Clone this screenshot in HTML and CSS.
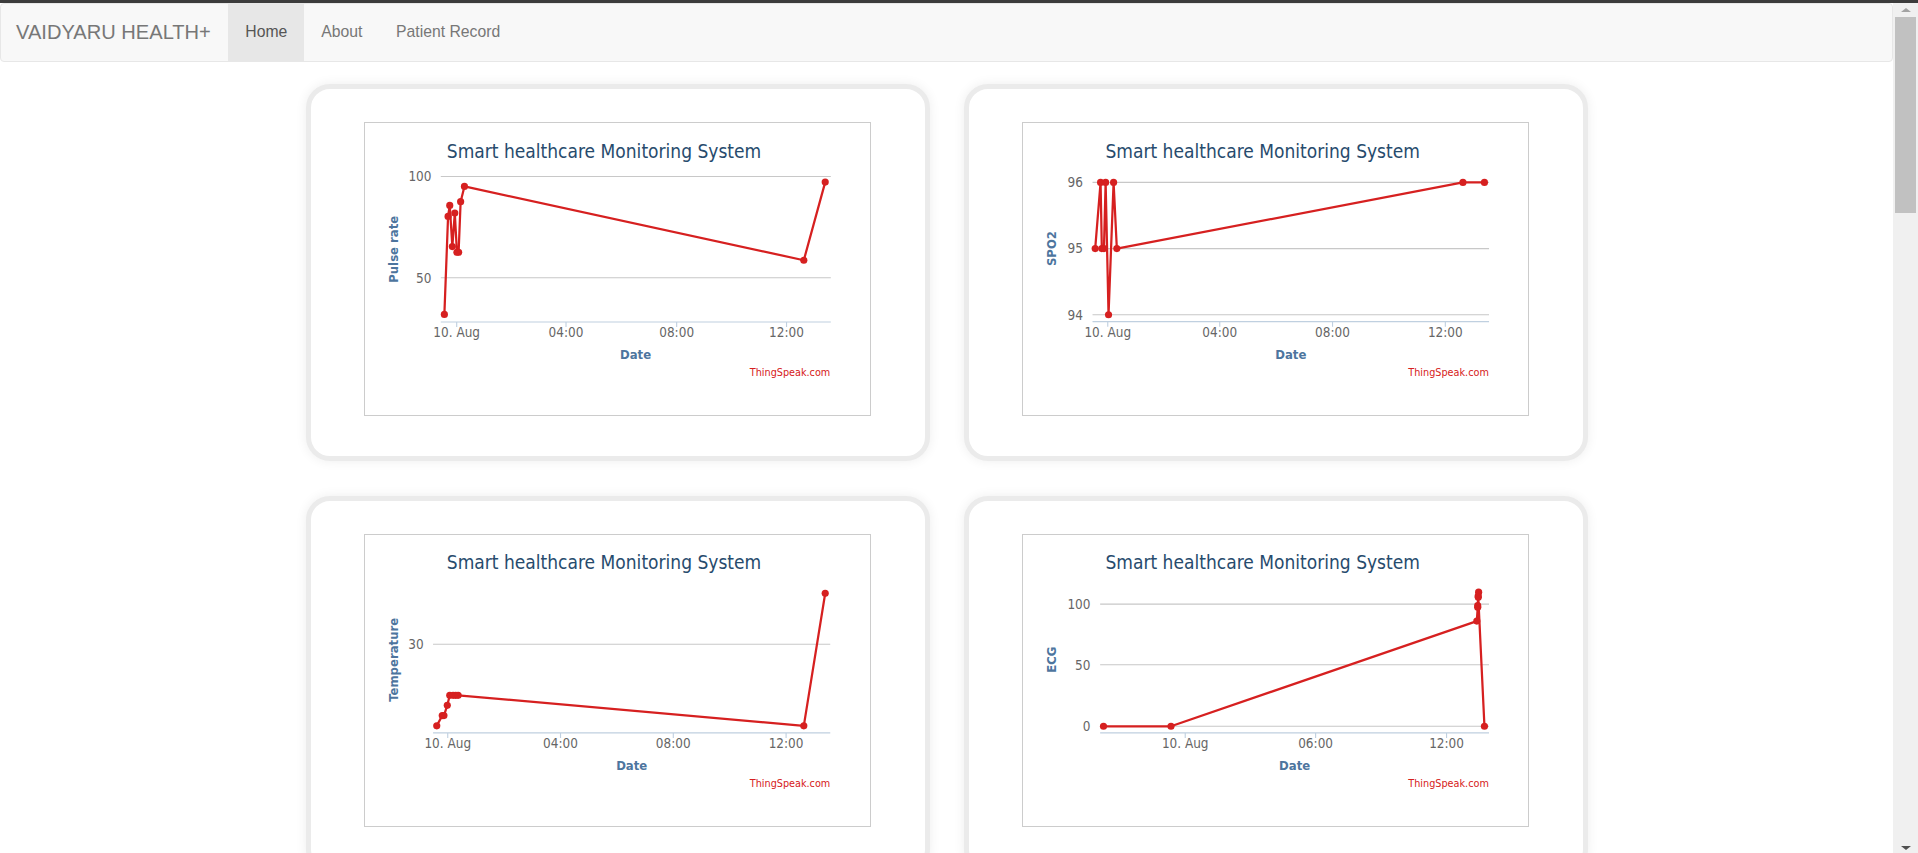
FILE: index.html
```html
<!DOCTYPE html>
<html lang="en">
<head>
<meta charset="utf-8">
<title>VAIDYARU HEALTH+</title>
<link rel="stylesheet" href="styles.css">
</head>
<body>
<div class="topstrip"></div>
<div class="window">
  <div class="page">
    <nav class="navbar">
      <a class="brand" href="#">VAIDYARU HEALTH+</a>
      <ul class="nav">
        <li><a class="active" href="#">Home</a></li>
        <li><a href="#">About</a></li>
        <li><a href="#">Patient Record</a></li>
      </ul>
    </nav>
    <main class="grid">
      <section class="card">
        <div class="frame">
          <svg class="chart" viewBox="0 0 450 260" preserveAspectRatio="none">
            <text class="c-title" x="213.2" y="31.4" text-anchor="middle" textLength="280.5" lengthAdjust="spacingAndGlyphs">Smart healthcare Monitoring System</text>
            <path class="c-grid" d="M67.6 47.7H415.5M67.6 138H415.5"/>
            <path class="c-axis" d="M67.6 177.5H415.5M81.8 177.5v4.5M179.3 177.5v4.5M278 177.5v4.5M376 177.5v4.5"/>
            <text class="c-lab" x="59.3" y="52" text-anchor="end">100</text>
            <text class="c-lab" x="59.3" y="142.3" text-anchor="end">50</text>
            <text class="c-lab" x="81.8" y="191" text-anchor="middle">10. Aug</text>
            <text class="c-lab" x="179.3" y="191" text-anchor="middle">04:00</text>
            <text class="c-lab" x="278" y="191" text-anchor="middle">08:00</text>
            <text class="c-lab" x="376" y="191" text-anchor="middle">12:00</text>
            <text class="c-atitle" transform="translate(29.8 112.6) rotate(-90)" text-anchor="middle">Pulse rate</text>
            <text class="c-atitle" x="241.3" y="210.7" text-anchor="middle">Date</text>
            <polyline class="c-line" points="70.8,170.7 74.1,83.3 75.6,73.5 77.9,110.2 80.1,80.3 82,115.3 83.5,115.3 85.3,70.2 88.7,56.6 391.4,122.4 410.5,52.7"/>
            <g class="c-dots">
              <circle cx="70.8" cy="170.7" r="3.2"/><circle cx="74.1" cy="83.3" r="3.2"/><circle cx="75.6" cy="73.5" r="3.2"/>
              <circle cx="77.9" cy="110.2" r="3.2"/><circle cx="80.1" cy="80.3" r="3.2"/><circle cx="82" cy="115.3" r="3.2"/>
              <circle cx="83.5" cy="115.3" r="3.2"/><circle cx="85.3" cy="70.2" r="3.2"/><circle cx="88.7" cy="56.6" r="3.2"/>
              <circle cx="391.4" cy="122.4" r="3.2"/><circle cx="410.5" cy="52.7" r="3.2"/>
            </g>
            <text class="c-credits" x="415" y="225.5" text-anchor="end">ThingSpeak.com</text>
          </svg>
        </div>
      </section>
      <section class="card">
        <div class="frame">
          <svg class="chart" viewBox="0 0 450 260" preserveAspectRatio="none">
            <text class="c-title" x="213.8" y="31.6" text-anchor="middle" textLength="280.5" lengthAdjust="spacingAndGlyphs">Smart healthcare Monitoring System</text>
            <path class="c-grid" d="M62 53H415.7M62 112H415.7M62 171H415.7"/>
            <path class="c-axis" d="M62 177.2H415.7M75.6 177.2v4.5M175.5 177.2v4.5M276.1 177.2v4.5M376.7 177.2v4.5"/>
            <text class="c-lab" x="53.5" y="57.3" text-anchor="end">96</text>
            <text class="c-lab" x="53.5" y="116.3" text-anchor="end">95</text>
            <text class="c-lab" x="53.5" y="175.3" text-anchor="end">94</text>
            <text class="c-lab" x="75.6" y="191" text-anchor="middle">10. Aug</text>
            <text class="c-lab" x="175.5" y="191" text-anchor="middle">04:00</text>
            <text class="c-lab" x="276.1" y="191" text-anchor="middle">08:00</text>
            <text class="c-lab" x="376.7" y="191" text-anchor="middle">12:00</text>
            <text class="c-atitle" transform="translate(29.8 112) rotate(-90)" text-anchor="middle">SPO2</text>
            <text class="c-atitle" x="238.9" y="210.7" text-anchor="middle">Date</text>
            <polyline class="c-line" points="64.4,112 69.2,53 70.3,112 72.2,112 73.7,53 76.3,171 80.8,53 83.7,112 392.4,53 411.6,53"/>
            <g class="c-dots">
              <circle cx="64.4" cy="112" r="3.2"/><circle cx="69.2" cy="53" r="3.2"/><circle cx="70.3" cy="112" r="3.2"/>
              <circle cx="72.2" cy="112" r="3.2"/><circle cx="73.7" cy="53" r="3.2"/><circle cx="76.3" cy="171" r="3.2"/>
              <circle cx="80.8" cy="53" r="3.2"/><circle cx="83.7" cy="112" r="3.2"/><circle cx="392.4" cy="53" r="3.2"/>
              <circle cx="411.6" cy="53" r="3.2"/>
            </g>
            <text class="c-credits" x="415.5" y="225.5" text-anchor="end">ThingSpeak.com</text>
          </svg>
        </div>
      </section>
      <section class="card">
        <div class="frame">
          <svg class="chart" viewBox="0 0 450 260" preserveAspectRatio="none">
            <text class="c-title" x="213.2" y="30.7" text-anchor="middle" textLength="280.5" lengthAdjust="spacingAndGlyphs">Smart healthcare Monitoring System</text>
            <path class="c-grid" d="M60.7 97.5H415"/>
            <path class="c-axis" d="M60.7 176.5H415M73.8 176.5v4.5M174.4 176.5v4.5M275 176.5v4.5M375.6 176.5v4.5"/>
            <text class="c-lab" x="52.4" y="101.8" text-anchor="end">30</text>
            <text class="c-lab" x="73.8" y="190.2" text-anchor="middle">10. Aug</text>
            <text class="c-lab" x="174.4" y="190.2" text-anchor="middle">04:00</text>
            <text class="c-lab" x="275" y="190.2" text-anchor="middle">08:00</text>
            <text class="c-lab" x="375.6" y="190.2" text-anchor="middle">12:00</text>
            <text class="c-atitle" transform="translate(29.6 111.3) rotate(-90)" text-anchor="middle">Temperature</text>
            <text class="c-atitle" x="237.9" y="209.5" text-anchor="middle">Date</text>
            <polyline class="c-line" points="64,170.2 68.9,161.1 70.4,161.1 73.4,151.9 75.6,143 78.6,143 80.9,143 83.1,143 391.4,170.2 410.5,52"/>
            <g class="c-dots">
              <circle cx="64" cy="170.2" r="3.2"/><circle cx="68.9" cy="161.1" r="3.2"/><circle cx="70.4" cy="161.1" r="3.2"/>
              <circle cx="73.4" cy="151.9" r="3.2"/><circle cx="75.6" cy="143" r="3.2"/><circle cx="78.6" cy="143" r="3.2"/>
              <circle cx="80.9" cy="143" r="3.2"/><circle cx="83.1" cy="143" r="3.2"/><circle cx="391.4" cy="170.2" r="3.2"/>
              <circle cx="410.5" cy="52" r="3.2"/>
            </g>
            <text class="c-credits" x="415" y="224.5" text-anchor="end">ThingSpeak.com</text>
          </svg>
        </div>
      </section>
      <section class="card">
        <div class="frame">
          <svg class="chart" viewBox="0 0 450 260" preserveAspectRatio="none">
            <text class="c-title" x="213.8" y="30.7" text-anchor="middle" textLength="280.5" lengthAdjust="spacingAndGlyphs">Smart healthcare Monitoring System</text>
            <path class="c-grid" d="M68.8 61.7H415.7M68.8 115.7H415.7M68.8 170.6H415.7"/>
            <path class="c-axis" d="M68.8 176.5H415.7M144.7 176.5v4.5M261 176.5v4.5M377.8 176.5v4.5"/>
            <text class="c-lab" x="60.2" y="66" text-anchor="end">100</text>
            <text class="c-lab" x="60.2" y="120" text-anchor="end">50</text>
            <text class="c-lab" x="60.2" y="174.9" text-anchor="end">0</text>
            <text class="c-lab" x="144.7" y="190.2" text-anchor="middle">10. Aug</text>
            <text class="c-lab" x="261" y="190.2" text-anchor="middle">06:00</text>
            <text class="c-lab" x="377.8" y="190.2" text-anchor="middle">12:00</text>
            <text class="c-atitle" transform="translate(29.8 111.3) rotate(-90)" text-anchor="middle">ECG</text>
            <text class="c-atitle" x="242.3" y="209.5" text-anchor="middle">Date</text>
            <polyline class="c-line" points="71.8,170.6 132,170.6 404.8,76.8 405.6,64.5 405.6,63 406,54.5 406.4,51 406.1,55.5 411.6,170.6"/>
            <g class="c-dots">
              <circle cx="71.8" cy="170.6" r="3.2"/><circle cx="132" cy="170.6" r="3.2"/><circle cx="404.8" cy="76.8" r="3.2"/>
              <circle cx="405.6" cy="64.5" r="3.2"/><circle cx="405.6" cy="63" r="3.2"/><circle cx="406" cy="54.5" r="3.2"/>
              <circle cx="406.4" cy="51" r="3.2"/><circle cx="406.1" cy="55.5" r="3.2"/><circle cx="411.6" cy="170.6" r="3.2"/>
            </g>
            <text class="c-credits" x="415.5" y="224.5" text-anchor="end">ThingSpeak.com</text>
          </svg>
        </div>
      </section>
    </main>
  </div>
  <div class="scrollbar">
    <div class="sb-btn"><span class="sb-up"></span></div>
    <div class="sb-thumb"></div>
    <div class="sb-track"></div>
    <div class="sb-btn sb-btn-bottom"><span class="sb-down"></span></div>
  </div>
</div>
</body>
</html>
```

FILE: styles.css
```css
html, body {
  margin: 0;
  padding: 0;
  overflow: hidden;
  background: #ffffff;
}

body {
  font-family: "Liberation Sans", Arial, sans-serif;
  width: 1918px;
  height: 853px;
}

.topstrip {
  height: 3px;
  background: #3c3c3c;
}

.window {
  display: flex;
  height: 850px;
}

.page {
  width: 1893px;
  flex: none;
  overflow: hidden;
}

/* navbar */
.navbar {
  display: flex;
  align-items: stretch;
  height: 58.5px;
  box-sizing: border-box;
  background: #f8f8f8;
  border: 1px solid #e7e7e7;
  border-radius: 4px;
  margin-bottom: 22.5px;
}

.brand {
  display: block;
  padding: 0 17.6px 0 15px;
  font-size: 20.1px;
  line-height: 56.5px;
  color: #777777;
  text-decoration: none;
}

.nav {
  display: flex;
  list-style: none;
  margin: 0;
  padding: 0;
}

.nav a {
  display: block;
  padding: 0 16.9px;
  font-size: 15.75px;
  line-height: 56.5px;
  color: #777777;
  text-decoration: none;
}

.nav a.active {
  background: #e7e7e7;
  color: #555555;
}

/* cards */
.grid {
  width: 1282px;
  margin: 0 auto;
  display: grid;
  grid-template-columns: 624px 624px;
  column-gap: 34px;
  row-gap: 34.5px;
}

.card {
  box-sizing: border-box;
  height: 377px;
  border: 5px solid #ebebeb;
  border-radius: 24px;
  background: #ffffff;
  box-shadow: 0 0 12px rgba(0, 0, 0, 0.07);
  padding-top: 33px;
  display: flex;
  justify-content: center;
  align-items: flex-start;
}

.frame {
  width: 504.5px;
  height: 291.5px;
  border: 1px solid #cccccc;
  flex: none;
}

.chart {
  display: block;
  width: 100%;
  height: 100%;
}

.chart text {
  font-family: "DejaVu Sans Condensed", "DejaVu Sans", sans-serif;
  font-stretch: condensed;
}

.c-title {
  font-size: 17px;
  fill: #274b6d;
}

.c-lab {
  font-size: 12px;
  fill: #666666;
}

.c-atitle {
  font-size: 11.6px;
  font-weight: bold;
  fill: #4d759e;
}

.c-credits {
  font-size: 9.6px;
  fill: #d62020;
}

.c-grid {
  fill: none;
  stroke: #c8c8c8;
  stroke-width: 1;
}

.c-axis {
  fill: none;
  stroke: #c0d0e0;
  stroke-width: 1;
}

.c-line {
  fill: none;
  stroke: #d62020;
  stroke-width: 2;
  stroke-linejoin: round;
}

.c-dots circle {
  fill: #d62020;
}

/* scrollbar */
.scrollbar {
  width: 25px;
  flex: none;
  background: #f0f0f0;
  display: flex;
  flex-direction: column;
}

.sb-btn {
  height: 14px;
  display: flex;
  justify-content: center;
  align-items: center;
}

.sb-btn-bottom {
  height: 17px;
  align-items: flex-end;
  padding-bottom: 3px;
  box-sizing: border-box;
}

.sb-up {
  width: 0;
  height: 0;
  border-left: 5.5px solid transparent;
  border-right: 5.5px solid transparent;
  border-bottom: 4px solid #a3a3a3;
}

.sb-down {
  width: 0;
  height: 0;
  border-left: 5.5px solid transparent;
  border-right: 5.5px solid transparent;
  border-top: 4px solid #505050;
}

.sb-thumb {
  height: 196px;
  margin: 0 2px 0 2px;
  background: #c1c1c1;
}

.sb-track {
  flex: 1;
}
```
